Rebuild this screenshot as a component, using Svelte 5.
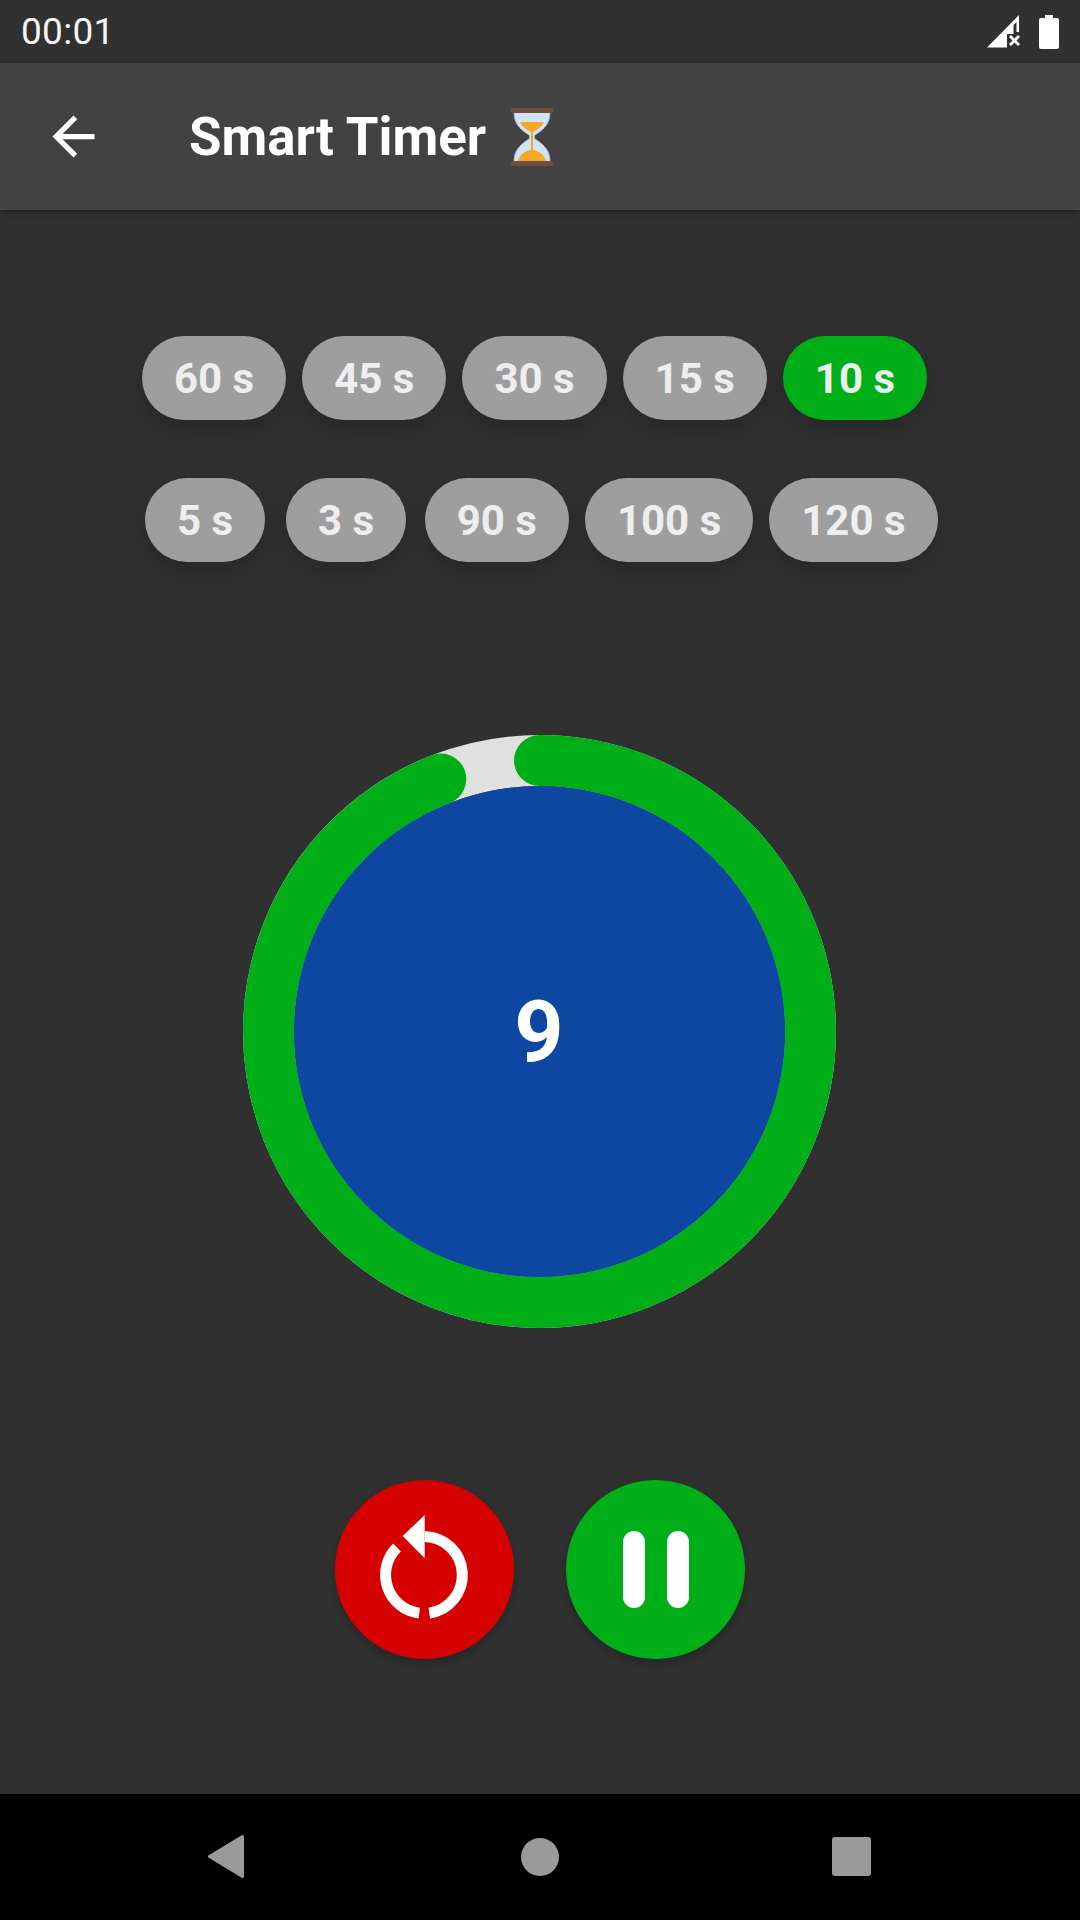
<script>
  const rowOne = [
    { label: '60 s' },
    { label: '45 s' },
    { label: '30 s' },
    { label: '15 s' },
    { label: '10 s', active: true },
  ];
  const rowTwo = [
    { label: '5 s', short: true },
    { label: '3 s', short: true },
    { label: '90 s' },
    { label: '100 s' },
    { label: '120 s' },
  ];

  let remaining = $state(9);

  // ring geometry, progress stops 21.5 degrees short of a full turn
  const radius = 271;
  const angle = (338.5 * Math.PI) / 180;
  const circumference = 2 * Math.PI * radius;
  const dash = (angle / (2 * Math.PI)) * circumference;
</script>

<div class="screen">
  <div class="status-bar">
    <span class="clock">00:01</span>
    <div class="status-icons">
      <svg class="signal" width="36" height="36" viewBox="0 0 36 36">
        <path d="M34 1 L2 33.5 H22 V20 H28.5 V11 L31.5 8 V18 H34 Z" fill="#fff" />
        <path d="M24 23 l2-2 3.5 3.5 3.5-3.5 2 2-3.5 3.5 3.5 3.5-2 2-3.5-3.5-3.5 3.5-2-2 3.5-3.5 z" fill="#fff" />
      </svg>
      <svg class="battery" width="20" height="34" viewBox="0 0 20 34">
        <path d="M6 0 H14 V3 H18 A2 2 0 0 1 20 5 V32 A2 2 0 0 1 18 34 H2 A2 2 0 0 1 0 32 V5 A2 2 0 0 1 2 3 H6 Z" fill="#fff" />
      </svg>
    </div>
  </div>

  <header class="app-bar">
    <button type="button" class="back" aria-label="Back">
      <svg width="63" height="63" viewBox="0 0 24 24">
        <path d="M20 11H7.83l5.59-5.59L12 4l-8 8 8 8 1.41-1.41L7.83 13H20v-2z" fill="#fff" />
      </svg>
    </button>
    <h1 class="title">Smart Timer</h1>
    <svg class="hourglass" width="44" height="58" viewBox="0 0 44 58">
      <path d="M4 4 H40 C40 14 36 20 25 27 C24 28 24 30 25 31 C36 38 40 44 40 54 H4 C4 44 8 38 19 31 C20 30 20 28 19 27 C8 20 4 14 4 4 Z" fill="#cfe5f7" stroke="#a9c0d2" stroke-width="1" />
      <path d="M10 14 H34 C32 19 27 22 23 24 V42 C29 43 34 46 36 53 H8 C10 46 15 43 21 42 V24 C17 22 12 19 10 14 Z" fill="#f9a825" />
      <rect x="0.5" y="0" width="43" height="5" rx="2.5" fill="#6d4c41" />
      <rect x="0.5" y="53" width="43" height="5" rx="2.5" fill="#6d4c41" />
    </svg>
  </header>

  <main class="content">
    <div class="chips chips-first">
      {#each rowOne as chip}
        <button type="button" class="chip" class:active={chip.active}>{chip.label}</button>
      {/each}
    </div>
    <div class="chips chips-second">
      {#each rowTwo as chip}
        <button type="button" class="chip" class:short={chip.short}>{chip.label}</button>
      {/each}
    </div>

    <div class="dial">
      <svg class="ring" width="593" height="593" viewBox="0 0 593 593">
        <circle cx="296.5" cy="296.5" r={radius} fill="none" stroke="#e0e0e0" stroke-width="51" />
        <circle
          cx="296.5"
          cy="296.5"
          r={radius}
          fill="none"
          stroke="#00ae18"
          stroke-width="51"
          stroke-linecap="round"
          stroke-dasharray="{dash} {circumference}"
          transform="rotate(-90 296.5 296.5)"
        />
      </svg>
      <div class="face">{remaining}</div>
    </div>

    <div class="controls">
      <button type="button" class="round reset" aria-label="Reset">
        <svg width="179" height="179" viewBox="0 0 179 179">
          <path d="M89.7 56.5 A38.5 38.5 0 0 1 94.3 133.1" fill="none" stroke="#fff" stroke-width="11" />
          <path d="M84.3 133.1 A38.5 38.5 0 0 1 62 67.5" fill="none" stroke="#fff" stroke-width="11" />
          <path d="M67.7 56 L89.7 35 V78.3 Z" fill="#fff" />
        </svg>
      </button>
      <button type="button" class="round pause" aria-label="Pause">
        <span class="bar"></span>
        <span class="bar"></span>
      </button>
    </div>
  </main>

  <nav class="nav-bar">
    <svg width="36" height="43" viewBox="0 0 36 43" class="nav-back">
      <path d="M34.5 1.5 L1.5 21.5 L34.5 41.5 Z" fill="#9a9a9a" stroke="#9a9a9a" stroke-width="3" stroke-linejoin="round" />
    </svg>
    <span class="nav-home"></span>
    <span class="nav-recent"></span>
  </nav>
</div>

<style>
  :global(body) {
    background: #303030;
  }

  .screen {
    width: 1080px;
    height: 1920px;
    display: flex;
    flex-direction: column;
    background: #303030;
    font-family: Roboto, "Liberation Sans", sans-serif;
    color: #fff;
    overflow: hidden;
  }

  .status-bar {
    height: 63px;
    display: flex;
    align-items: center;
    justify-content: space-between;
    padding: 0 21px;
    background: #313131;
    box-sizing: border-box;
  }

  .clock {
    font-size: 37px;
    letter-spacing: 0.3px;
    color: #f5f5f5;
  }

  .status-icons {
    display: flex;
    align-items: center;
    gap: 18px;
  }

  .signal,
  .battery {
    display: block;
  }

  .app-bar {
    position: relative;
    z-index: 1;
    height: 147px;
    display: flex;
    align-items: center;
    background: #424242;
    box-shadow: 0 3px 6px rgba(0, 0, 0, 0.28);
  }

  .back {
    margin-left: 42px;
    padding: 0;
    width: 63px;
    height: 63px;
    border: 0;
    background: none;
  }

  .back svg,
  .round svg {
    display: block;
  }

  .title {
    margin: 0 0 0 84px;
    font-size: 52.8px;
    font-weight: 700;
    color: #fff;
  }

  .hourglass {
    margin-left: 23.5px;
  }

  .content {
    flex: 1;
    display: flex;
    flex-direction: column;
    align-items: center;
  }

  .chips {
    display: flex;
    justify-content: center;
    gap: 16px;
    width: 100%;
    box-sizing: border-box;
  }

  .chips-first {
    margin-top: 126px;
    padding-right: 11px;
  }

  .chips-second {
    margin-top: 58px;
  }

  .chip {
    height: 84px;
    padding: 0 32px;
    border: 0;
    border-radius: 42px;
    background: #9e9e9e;
    color: #eeeeee;
    font-family: inherit;
    font-size: 42px;
    font-weight: 700;
    box-shadow: 0 10px 22px rgba(0, 0, 0, 0.18);
  }

  .chip.short {
    margin: 0 2.5px;
  }

  .chip.active {
    background: #00ae18;
  }

  .dial {
    position: relative;
    margin-top: 173px;
    margin-left: -2px;
    width: 593px;
    height: 593px;
    display: flex;
    align-items: center;
    justify-content: center;
  }

  .ring {
    position: absolute;
    inset: 0;
  }

  .face {
    position: relative;
    width: 491px;
    height: 491px;
    border-radius: 50%;
    background: #0d47a1;
    display: flex;
    align-items: center;
    justify-content: center;
    font-size: 86px;
    font-weight: 700;
    color: #fff;
  }

  .controls {
    margin-top: 152px;
    display: flex;
    gap: 52px;
  }

  .round {
    width: 179px;
    height: 179px;
    padding: 0;
    border: 0;
    border-radius: 50%;
    box-shadow: 0 5px 10px rgba(0, 0, 0, 0.2);
  }

  .reset {
    background: #d50000;
  }

  .pause {
    background: #00ae18;
    display: flex;
    align-items: center;
    justify-content: center;
    gap: 22px;
  }

  .bar {
    width: 22px;
    height: 77px;
    border-radius: 11px;
    background: #fff;
  }

  .nav-bar {
    position: relative;
    height: 126px;
    background: #000;
  }

  .nav-back,
  .nav-home,
  .nav-recent {
    position: absolute;
    display: block;
  }

  .nav-back {
    left: 207.5px;
    top: 41px;
  }

  .nav-home {
    left: 521px;
    top: 44px;
    width: 38px;
    height: 38px;
    border-radius: 50%;
    background: #9a9a9a;
  }

  .nav-recent {
    left: 831.5px;
    top: 43px;
    width: 39px;
    height: 39px;
    border-radius: 3px;
    background: #9a9a9a;
  }
</style>
